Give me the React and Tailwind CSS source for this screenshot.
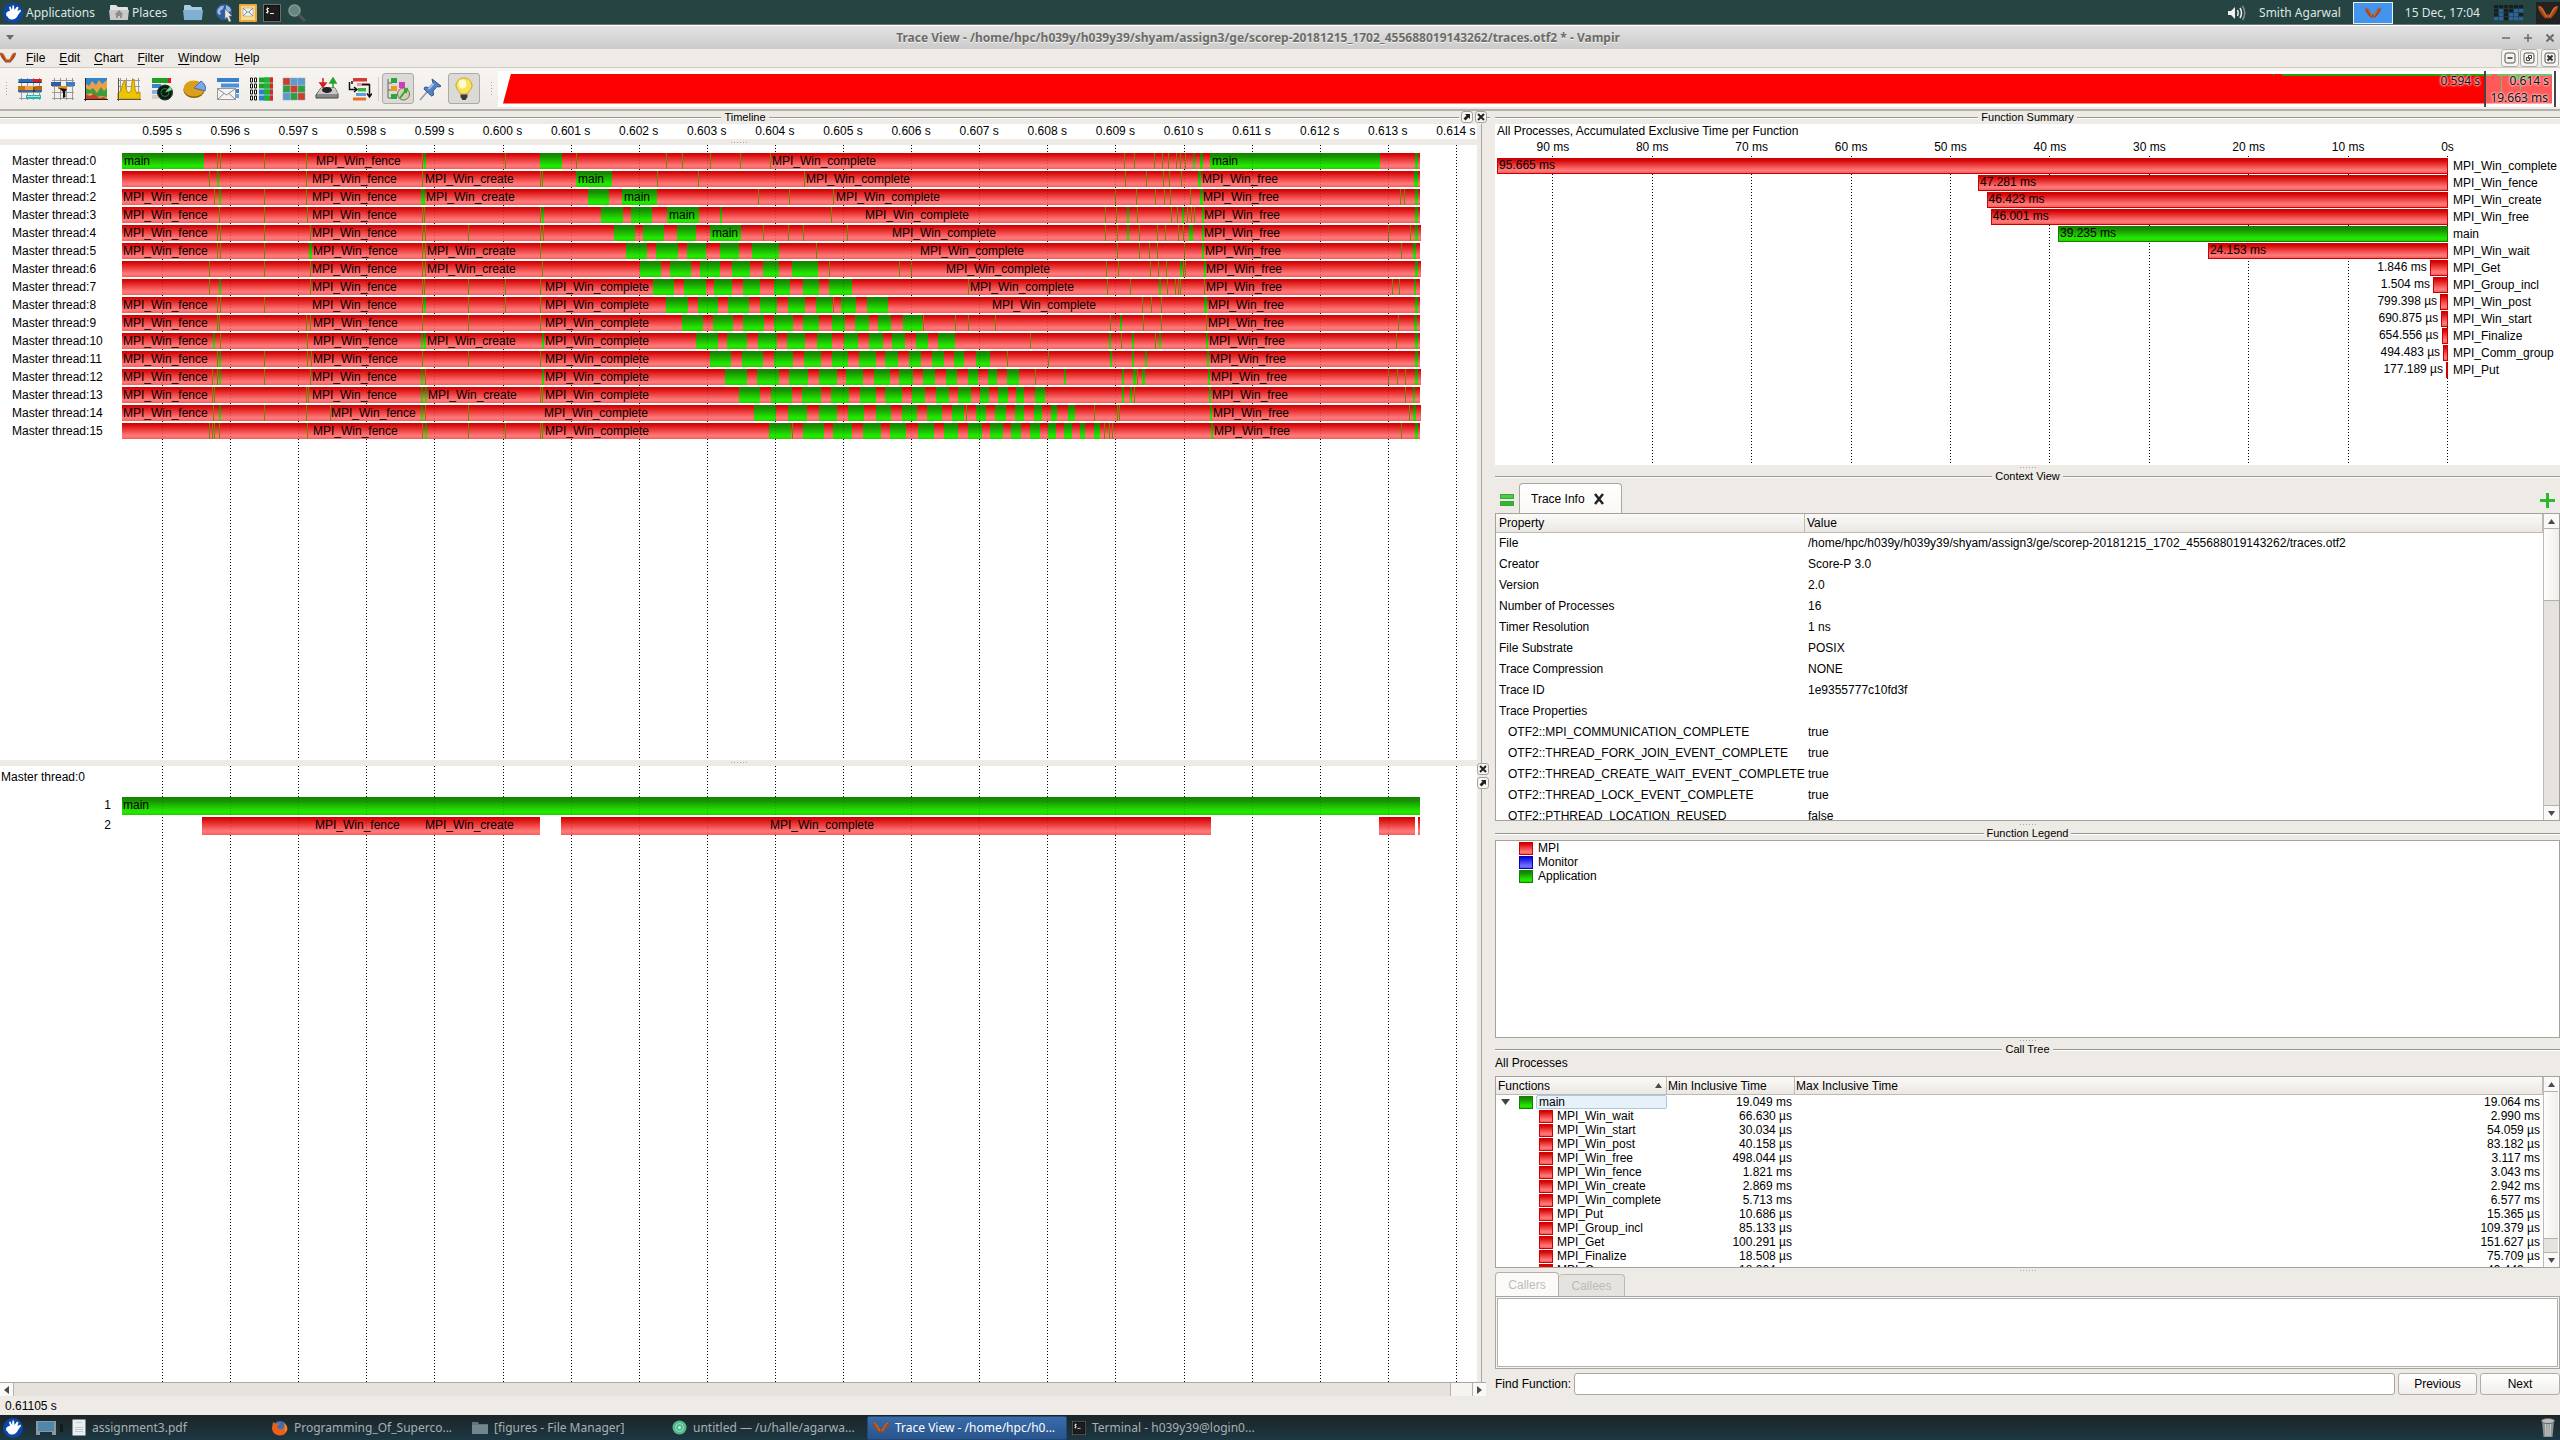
import React from "react";

const RED = "bg-[linear-gradient(to_bottom,#d00000_0%,#d80a0a_12%,#ff7272_75%,#ff7a7a_82%,#f45c5c_100%)]";
const GREEN = "bg-[linear-gradient(to_bottom,#148200_0%,#188f02_20%,#22df00_72%,#25ea00_85%,#20cc00_100%)]";
const BLUE = "bg-[linear-gradient(to_bottom,#0000d8_0%,#7272ff_80%,#5c5cf4_100%)]";
const DOTS = "bg-[repeating-linear-gradient(to_bottom,#000_0px,#000_1px,transparent_1px,transparent_3px)]";

/* Timeline geometry: plot coordinates run from 122 to 1477. */
const px = (x) => `${((x - 122) / 1355) * 100}%`;
const pw = (w) => `${(w / 1355) * 100}%`;
const ticks = Array.from({ length: 20 }, (_, i) => ({
  x: 162 + i * 68.1,
  t: (0.595 + i / 1000).toFixed(3) + " s",
}));

const F = "MPI_Win_fence";
const C = "MPI_Win_create";
const K = "MPI_Win_complete";
const R = "MPI_Win_free";

/* g: application segments as [start, end] or a single start for a hairline; t: labels. */
const threads = [
  { g: [[122, 204], 217, 220, 264, 306, 422, [424, 426], 505, [540, 562], 576, 666, 682, 710, 740, 770, 1124, 1134, 1154, 1162, 1168, 1176, 1180, 1185, [1193, 1195], [1200, 1203], [1210, 1380], [1415, 1418]], t: [[123, "main"], [315, F], [771, K], [1211, "main"]] },
  { g: [209, [217, 219], 306, 422, 540, 542, [576, 612], 657, 698, 804, 1125, 1146, 1163, 1169, 1181, [1198, 1201], [1414, 1418]], t: [[311, F], [424, C], [577, "main"], [805, K], [1201, R]] },
  { g: [214, [219, 221], 264, 306, [421, 425], [588, 609], [622, 657], 758, 789, 833, 1115, 1136, 1155, 1164, 1170, 1190, [1200, 1203], 1400, 1404, [1415, 1418]], t: [[122, F], [311, F], [425, C], [623, "main"], [835, K], [1202, R]] },
  { g: [219, 264, 307, 422, 424, 540, [542, 544], [601, 623], [631, 652], [667, 699], [720, 722], 831, 1105, 1116, [1127, 1129], 1137, 1171, 1177, [1182, 1184], 1187, 1191, 1194, [1202, 1204], [1415, 1418]], t: [[122, F], [311, F], [668, "main"], [864, K], [1203, R]] },
  { g: [217, 220, 264, 310, 422, 425, 468, 540, 543, [614, 635], [643, 664], [677, 696], [710, 741], 763, 788, 803, 847, 1105, 1117, [1127, 1129], 1139, 1157, 1165, 1178, 1183, [1189, 1193], [1202, 1204], 1388, 1410, [1415, 1418]], t: [[122, F], [311, F], [711, "main"], [891, K], [1203, R]], end: 1421 },
  { g: [217, 220, 264, [309, 312], 422, 425, 540, [626, 647], [656, 678], [687, 706], [720, 739], [752, 779], 816, 1117, 1139, 1149, 1157, 1184, [1202, 1204], 1401, [1413, 1416]], t: [[122, F], [312, F], [426, C], [919, K], [1204, R]] },
  { g: [209, 264, 310, 422, 425, 542, [640, 661], [670, 691], [700, 720], [732, 750], [763, 779], [792, 818], 829, 899, 911, 1106, 1118, 1150, 1158, 1166, [1180, 1182], 1183, 1185, [1204, 1206], [1415, 1418]], t: [[311, F], [426, C], [945, K], [1205, R]], end: 1421 },
  { g: [209, [219, 221], 310, 422, 424, 468, 505, 540, [653, 674], [684, 706], [714, 732], [743, 760], [774, 790], [803, 819], [829, 852], 968, 1107, 1130, [1159, 1161], 1167, 1175, 1178, 1180, 1204, 1392, 1399, [1414, 1416]], t: [[311, F], [544, K], [969, K], [1205, R]] },
  { g: [217, 220, 264, 422, [424, 426], 468, 505, 540, [666, 688], [698, 718], [728, 749], [760, 777], [788, 805], [816, 832], 833, [841, 856], [867, 888], 1142, 1151, 1161, [1204, 1207], [1415, 1418]], t: [[122, F], [311, F], [544, K], [991, K], [1207, R]] },
  { g: [217, 219, 306, 310, 422, 468, 540, [682, 703], [713, 733], [743, 764], [774, 793], [803, 819], [832, 845], [855, 869], [878, 891], [903, 922], 923, 955, 968, 995, 1110, [1120, 1122], 1143, 1161, 1206, 1398, [1414, 1417]], t: [[122, F], [312, F], [544, K], [1207, R]] },
  { g: [[213, 215], 220, 307, [421, 423], [424, 426], [542, 544], [696, 718], [727, 747], [758, 777], [787, 805], [817, 832], [844, 858], [869, 883], [892, 905], [916, 928], [938, 955], 1030, [1109, 1111], 1121, [1132, 1134], 1155, [1159, 1161], [1206, 1208], 1396, [1415, 1418]], t: [[122, F], [312, F], [426, C], [544, K], [1208, R]] },
  { g: [217, [219, 221], 264, 307, 311, 422, 468, 540, [710, 731], [742, 763], [774, 793], [804, 821], [832, 848], [859, 876], [885, 898], [909, 921], [932, 944], [954, 964], [976, 990], 1007, 1048, [1110, 1112], [1132, 1134], [1145, 1147], [1207, 1209], [1415, 1418]], t: [[122, F], [312, F], [544, K], [1209, R]] },
  { g: [212, 217, [219, 221], 264, 310, [421, 423], 425, [542, 544], [725, 747], [757, 779], [789, 808], [819, 837], [846, 863], [874, 890], [899, 913], [923, 935], [946, 957], [968, 978], [988, 997], [1007, 1019], 1035, [1064, 1066], [1122, 1124], [1133, 1136], 1137, [1142, 1145], [1208, 1210], 1388, 1397, 1405, [1415, 1418]], t: [[122, F], [311, F], [544, K], [1210, R]], end: 1421 },
  { g: [212, 214, 306, 308, [421, 423], [425, 427], 540, 542, [739, 760], [771, 792], [802, 821], [831, 849], [860, 876], [885, 902], [912, 925], [936, 949], [958, 971], [980, 989], [998, 1008], [1016, 1024], [1035, 1045], [1122, 1124], [1130, 1132], 1134, [1209, 1211], 1405, [1413, 1415]], t: [[122, F], [311, F], [427, C], [544, K], [1211, R]] },
  { g: [213, [219, 221], 264, 306, 330, [421, 423], 425, 468, [754, 776], [788, 807], [819, 837], [848, 864], [876, 891], [902, 917], [927, 942], [952, 964], 966, [976, 986], [995, 1006], [1015, 1024], [1034, 1042], [1051, 1057], [1068, 1075], 1094, 1117, 1119, [1210, 1212], 1409, [1413, 1416]], t: [[122, F], [330, F], [543, K], [1212, R]], end: 1421 },
  { g: [209, 212, 214, 219, 307, 422, [425, 427], 468, 505, 540, 542, [769, 791], 792, [803, 824], [833, 852], [863, 881], [890, 906], [918, 934], [944, 958], [968, 982], [990, 1003], [1011, 1021], [1030, 1040], [1048, 1056], [1064, 1072], [1080, 1085], [1094, 1100], 1104, 1109, 1112, [1211, 1213], 1401, [1415, 1418]], t: [[312, F], [544, K], [1213, R]] },
];

const summary = [
  [K, 95.665, "95.665 ms"], [F, 47.281, "47.281 ms"], [C, 46.423, "46.423 ms"], [R, 46.001, "46.001 ms"],
  ["main", 39.235, "39.235 ms"], ["MPI_Win_wait", 24.153, "24.153 ms"], ["MPI_Get", 1.846, "1.846 ms"],
  ["MPI_Group_incl", 1.504, "1.504 ms"], ["MPI_Win_post", 0.799, "799.398 µs"], ["MPI_Win_start", 0.691, "690.875 µs"],
  ["MPI_Finalize", 0.655, "654.556 µs"], ["MPI_Comm_group", 0.494, "494.483 µs"], ["MPI_Put", 0.177, "177.189 µs"],
];

const props = [
  ["File", "/home/hpc/h039y/h039y39/shyam/assign3/ge/scorep-20181215_1702_455688019143262/traces.otf2"],
  ["Creator", "Score-P 3.0"], ["Version", "2.0"], ["Number of Processes", "16"], ["Timer Resolution", "1 ns"],
  ["File Substrate", "POSIX"], ["Trace Compression", "NONE"], ["Trace ID", "1e9355777c10fd3f"], ["Trace Properties", ""],
  ["OTF2::MPI_COMMUNICATION_COMPLETE", "true", 1], ["OTF2::THREAD_FORK_JOIN_EVENT_COMPLETE", "true", 1],
  ["OTF2::THREAD_CREATE_WAIT_EVENT_COMPLETE", "true", 1], ["OTF2::THREAD_LOCK_EVENT_COMPLETE", "true", 1],
  ["OTF2::PTHREAD_LOCATION_REUSED", "false", 1],
];

const tree = [
  ["MPI_Win_wait", "66.630 µs", "2.990 ms"], ["MPI_Win_start", "30.034 µs", "54.059 µs"], ["MPI_Win_post", "40.158 µs", "83.182 µs"],
  [R, "498.044 µs", "3.117 ms"], [F, "1.821 ms", "3.043 ms"], [C, "2.869 ms", "2.942 ms"], [K, "5.713 ms", "6.577 ms"],
  ["MPI_Put", "10.686 µs", "15.365 µs"], ["MPI_Group_incl", "85.133 µs", "109.379 µs"], ["MPI_Get", "100.291 µs", "151.627 µs"],
  ["MPI_Finalize", "18.508 µs", "75.709 µs"], ["MPI_Comm_group", "18.204 µs", "49.449 µs"],
];

function Svg({ w = 24, h = 24, box, children, className = "" }) {
  return (
    <svg width={w} height={h} viewBox={box || `0 0 ${w} ${h}`} className={`block shrink-0 ${className}`} aria-hidden="true">
      {children}
    </svg>
  );
}

const VLogo = ({ w = 16, h = 12 }) => (
  <Svg w={w} h={h} box="0 0 16 12">
    <path d="M0 1C2 0 4 2 5 4.500L7 8L8 7L9 8L11 4.500C12 2 14 0 16 1C16 4 13 8 10 11L9 10L8 11L7 10L6 11C3 8 0 4 0 1Z" fill="#a8481a" />
    <path d="M1 1.500C3 2 4 4 5 6L7 9.500M15 1.500C13 2 12 4 11 6L9 9.500" stroke="#d4712c" fill="none" />
  </Svg>
);

const Xubuntu = () => (
  <Svg w={20} h={20}>
    <circle cx="10" cy="10" r="10" fill="#0a47a9" />
    <path d="M3 11C4 8 6 8 7 8L6 4L7.500 3.500L9 7L9.500 2.500L11 2.500L11.500 7L14 3.500L15.500 4.500L14.500 8L17.500 6.500L18 8L15 12C14 15.500 10 17.500 6.500 16C5 15 5 13.500 3.500 13Z" fill="#fff" />
  </Svg>
);

const Folder = ({ color = "#7fb0d2", top = "#a9cbe2", home }) => (
  <Svg w={20} h={17}>
    <path d="M1 2Q1 1 2 1H7L9 3H18Q19 3 19 4V15Q19 16 18 16H2Q1 16 1 15Z" fill={top} />
    <path d="M0 6H20L19 15Q19 16 18 16H2Q1 16 1 15Z" fill={color} />
    {home && <path d="M10 6L14.500 10.500H13V14H11V12H9V14H7V10.500H5.500Z" fill="#8d8d8d" />}
  </Svg>
);

const Term = ({ s = 18 }) => (
  <Svg w={s} h={s} box="0 0 18 18">
    <rect x="0.500" y="0.500" width="17" height="17" fill="#1d1d1d" stroke="#6a6f6e" />
    <rect x="1.500" y="1.500" width="15" height="15" fill="none" stroke="#111" />
    <path d="M6 4.500H4Q3 5.500 4 6.500H5Q6 7.500 5 8.500H3M4.500 3.500V9.500M7 9.500H11" stroke="#e8e8e8" fill="none" />
  </Svg>
);

const grid = <path d="M3.500 1V23M9.500 1V23M15.500 1V23M21.500 1V23M1 3.500H23M1 9.500H23M1 15.500H23M1 21.500H23" stroke="#9a9a9a" fill="none" />;

const tools = [
  ["Master Timeline", <>
    {grid}
    <rect x="0.500" y="2" width="23" height="4" fill="#2d6cc0" /><rect x="15" y="2" width="8.500" height="4" fill="#e01b24" />
    <path d="M0.500 5.500H23.500" stroke="#1a3d70" />
    <rect x="0" y="9" width="7" height="4" fill="#c87510" /><rect x="7" y="9" width="10" height="4" fill="#f0a040" /><rect x="17" y="9" width="7" height="4" fill="#b5690c" />
    <rect x="0" y="13" width="24" height="2" fill="#3b66a0" /><rect x="8" y="18" width="15" height="4" fill="#2bb3b3" /><path d="M9 19.500H22" stroke="#a0e8e8" /><path d="M16 10V15" stroke="#111" /></>],
  ["Process Timeline", <>
    {grid}
    <rect x="0" y="5" width="10" height="4" fill="#2d5fa8" /><rect x="15" y="5" width="9" height="4" fill="#3f7ac4" />
    <rect x="7" y="9" width="9" height="3" fill="#e8892a" /><path d="M8 11L16 12L14 15L14.500 20L12 21L12 15Z" fill="#111" /></>],
  ["Counter Timeline", <>
    <rect x="1" y="1" width="22" height="21" fill="#2f86cc" /><path d="M1 6L5 9L8 4L12 8L15 3L18 7L23 3V22H1Z" fill="#e8a04a" />
    <path d="M1 11L6 13L9 11L13 16L17 10L20 14L23 11V20L18 19L12 20L7 16L1 18Z" fill="#3f9c3a" /><path d="M1 17L6 19L10 17L15 21L20 20L23 22H1Z" fill="#c2402c" />
    <path d="M1.500 1V24M0 22.500H24" stroke="#222" /></>],
  ["Performance Radar", <>
    {grid}
    <path d="M1 22V16L4 14L6 6L8 3L9 12L11 16L14 14L15 5L17 2L18 12L20 17L23 15V22Z" fill="#eec400" stroke="#c29400" /><path d="M1.500 1V24M0 22.500H24" stroke="#555" /></>],
  ["Function Summary", <>
    <rect x="2" y="1" width="19" height="5" fill="#21a121" /><rect x="18" y="1" width="3" height="5" fill="#e02020" /><rect x="2" y="7" width="9" height="4" fill="#3e7fd0" /><rect x="2" y="13" width="7" height="4" fill="#8ab0dc" /><rect x="2" y="18" width="7" height="4" fill="#d8cfc0" />
    <circle cx="15" cy="15.500" r="7.500" fill="#0b1d12" stroke="#1d3a28" /><circle cx="15" cy="15.500" r="4" fill="none" stroke="#2f7a45" /><path d="M15 15.500L20 9.500A8 8 0 0 1 22 13Z" fill="#7fdc8b" /></>],
  ["Message Summary", <>
    <ellipse cx="11" cy="13.500" rx="10.500" ry="7.500" fill="#8a6005" /><ellipse cx="11" cy="11.500" rx="10.500" ry="8" fill="#dba019" />
    <path d="M11 11L18 4Q24 8 22 14Z" fill="#7ea4e8" stroke="#4668b0" /></>],
  ["Process Summary", <>
    <rect x="1" y="1" width="22" height="4" fill="#3a7fd0" /><rect x="5" y="6.500" width="18" height="4" fill="#4d8fdc" /><rect x="10" y="12" width="13" height="4" fill="#3a7fd0" /><rect x="17" y="17" width="6" height="4" fill="#6aa4e4" />
    <rect x="1.500" y="11.500" width="18" height="11" fill="#f4f4f4" stroke="#9a9a9a" /><path d="M2 12L10.500 18L19 12M2 22L8 16.500M19 22L13 16.500" stroke="#8a8a8a" fill="none" /></>],
  ["Communication Matrix", <>
    {[0, 6, 12, 18].map((y) => <g key={y}><path d={`M1.500 ${y + 1}H3.500V${y + 5}H1.500ZM5.500 ${y + 1}H7.500V${y + 5}H5.500Z`} fill="#fff" stroke="#111" />
      <rect x="10" y={y + 0.500} width="14" height="5" fill={y > 6 ? "#2f7ecb" : "#1ca32c"} /><rect x="15" y={y + 0.500} width="6" height="5" fill="#22b032" /><rect x="21" y={y + 0.500} width="3" height="5" fill="#e02424" /></g>)}</>],
  ["I/O Summary", <>
    {[["#d33b2c", "#5b9bd5", "#5b9bd5"], ["#2f9e3f", "#d33b2c", "#2f9e3f"], ["#5b9bd5", "#2f9e3f", "#d33b2c"]].map((r, j) => r.map((c, i) => <rect key={`${i}-${j}`} x={1 + i * 7.500} y={1 + j * 7.500} width="7" height="7" fill={c} stroke="#8aa" strokeWidth="0.500" />))}</>],
  ["I/O Timeline", <>
    <path d="M6 11L20 11L23 17V21H1V18Z" fill="#8a8a8a" stroke="#444" /><path d="M6 11L20 11L23 17H2Z" fill="#c9c9c9" /><ellipse cx="12" cy="13" rx="5" ry="3" fill="#222" />
    <path d="M8 1V8M5 6L8 10L11 6Z" stroke="#d02020" strokeWidth="1.500" fill="#d02020" /><path d="M18 11V5M15 6L18 1L21 6Z" stroke="#28a428" strokeWidth="1.500" fill="#28a428" /></>],
  ["Call Tree", <>
    <rect x="5" y="1" width="14" height="3.500" fill="#d43a3a" /><rect x="9" y="6" width="12" height="3" fill="#e99a9a" /><rect x="10" y="11" width="8" height="3.500" fill="#35b53a" /><rect x="8" y="16" width="10" height="3" fill="#5c9fe0" /><rect x="5" y="20.500" width="13" height="3" fill="#e8702a" />
    <path d="M1.500 5V12.500H8M6 10L9 12.500L6 15M4 4V7M14 7.500H21.500V19M19 16.500L21.500 20L24 16.500" stroke="#111" fill="none" strokeWidth="1.500" /></>],
];

function Dock({ title }) {
  return (
    <div className="flex h-[13px] w-full shrink-0 items-center">
      <span className="h-[2px] flex-1 border-t border-[#9a9894] bg-white" />
      <h2 className="px-[3px] text-[11px] leading-[13px]">{title}</h2>
      <span className="h-[2px] flex-1 border-t border-[#9a9894] bg-white" />
    </div>
  );
}

function MiniButton({ kind }) {
  return (
    <button aria-label={kind} className="flex h-3 w-3 items-center justify-center rounded-[3px] border border-[#a5a29d] bg-[#f8f6f3]">
      <Svg w={8} h={8}>
        {kind === "close"
          ? <path d="M1 1L7 7M7 1L1 7" stroke="#222" strokeWidth="2" />
          : <path d="M2 1H7V6L5.500 4.500L2.500 7.500L0.500 5.500L3.500 2.500Z" fill="#222" />}
      </Svg>
    </button>
  );
}

function Dots() {
  return (
    <span className="flex shrink-0 gap-[2px]">
      {[0, 1, 2, 3, 4, 5].map((i) => <i key={i} className="h-px w-px bg-[#aaa7a2]" />)}
    </span>
  );
}

function GridLines({ faint }) {
  return (
    <div className={`pointer-events-none absolute inset-y-0 right-0 left-[122px] ${faint ? "opacity-20" : ""}`}>
      {ticks.map((k) => <i key={k.t} className={`absolute inset-y-0 w-px ${DOTS}`} style={{ left: px(k.x) }} />)}
    </div>
  );
}

function Seg({ a, b, color }) {
  return <i className={`absolute inset-y-0 ${color}`} style={{ left: px(a), width: pw(b - a) }} />;
}

function Labels({ items, lh }) {
  return items.map(([x, s]) => (
    <span key={x + s} className={`absolute top-0 pl-px whitespace-nowrap ${lh}`} style={{ left: px(x) }}>{s}</span>
  ));
}

function Scroll({ thumb, className = "w-4" }) {
  return (
    <div className={`flex shrink-0 flex-col border-l border-[#bdbab5] bg-[#e6e3df] ${className}`}>
      <button aria-label="Scroll up" className="flex h-[15px] shrink-0 items-center justify-center border-b border-[#b5b2ad] bg-[#faf9f7]"><Svg w={7} h={5}><path d="M3.500 0L7 5H0Z" fill="#4a4a4a" /></Svg></button>
      <div className={`border-b border-[#b5b2ad] bg-linear-to-r from-[#fdfdfc] to-[#f0eeea] ${thumb}`} />
      <div className="min-h-0 flex-[20] bg-[#e6e3df]" />
      <button aria-label="Scroll down" className="flex h-[15px] shrink-0 items-center justify-center border-t border-[#b5b2ad] bg-[#faf9f7]"><Svg w={7} h={5}><path d="M3.500 5L7 0H0Z" fill="#4a4a4a" /></Svg></button>
    </div>
  );
}

const HEAD = "border-r border-b border-[#bdbab5] bg-linear-to-b from-[#fbfaf8] to-[#ebe7e3] text-left font-normal";

function TopPanel() {
  return (
    <header className="flex h-[25px] shrink-0 items-center bg-[#254442] font-['Noto_Sans',sans-serif] text-[12px] text-[#dfe6e5]">
      <button className="flex items-center gap-[3px] pl-[3px]"><Xubuntu />Applications</button>
      <button className="flex items-center gap-[3px] pl-[14px]"><Folder color="#c9c9c7" top="#e2e2e0" home />Places</button>
      <button aria-label="File Manager" className="ml-4"><Folder /></button>
      <button aria-label="Web Browser" className="ml-3">
        <Svg w={20} h={20}><circle cx="9" cy="9" r="8" fill="#2f5f9e" /><path d="M3 6Q6 2 9 3L8 6L5 8L6 11L4 12Q1 9 3 6ZM11 2Q16 4 16 8L13 9L11 6Z" fill="#9cb9dc" /><path d="M10 6L17 13H14L16 18L14 19L12 14L10 16Z" fill="#e8e8e8" stroke="#777" strokeWidth="0.500" /></Svg>
      </button>
      <button aria-label="Mail" className="ml-1">
        <Svg w={18} h={18}><rect width="18" height="18" rx="1" fill="#e9a93a" /><rect x="2" y="2" width="14" height="14" fill="#f9d98e" /><rect x="4" y="4" width="10" height="8" fill="#f2f2f0" stroke="#999" strokeWidth="0.500" /><path d="M4 4L9 8.500L14 4M4 12L8 8M14 12L10 8" stroke="#888" fill="none" /></Svg>
      </button>
      <button aria-label="Terminal" className="ml-[6px]"><Term /></button>
      <button aria-label="Search" className="ml-[7px]">
        <Svg w={18} h={18}><circle cx="6.500" cy="6.500" r="5.500" fill="#62877f" stroke="#8a9896" strokeWidth="1.500" /><path d="M10.500 10.500L17 17" stroke="#4d5554" strokeWidth="3" /></Svg>
      </button>
      <div className="flex-1" />
      <button aria-label="Volume">
        <Svg w={20} h={16}><path d="M1 6H4L8 2V14L4 10H1Z" fill="#f0f0f0" /><path d="M10.500 5Q12 8 10.500 11M13 3Q16 8 13 13" stroke="#f0f0f0" strokeWidth="1.500" fill="none" /><path d="M15.500 1Q20 8 15.500 15" stroke="#7f918f" strokeWidth="1.500" fill="none" /></Svg>
      </button>
      <button className="ml-3">Smith Agarwal</button>
      <button aria-label="Workspace" className="ml-3 flex h-[22px] w-10 items-center justify-center border border-[#e6eef8] bg-[#4394ec]"><VLogo w={16} h={12} /></button>
      <time className="ml-3">15 Dec, 17:04</time>
      <Svg w={30} h={16} className="ml-[14px]">
        {["......", ".b..bb", ".b.bb.", "bb.bbb"].map((r, j) => r.split("").map((c, i) => <rect key={`${i}${j}`} x={i * 5} y={j * 4} width="4.200" height="3.300" fill={c === "b" ? "#2b63a0" : "#15201f"} />))}
      </Svg>
      <div className="ml-3 flex h-[22px] w-[24px] items-center justify-center bg-[#222]"><VLogo w={20} h={15} /></div>
    </header>
  );
}

function TitleBar() {
  return (
    <div className="relative flex h-6 shrink-0 items-center justify-between border-t border-white bg-linear-to-b from-[#e3e3e3] to-[#cbcbcb] px-[6px] font-['Noto_Sans',sans-serif] text-[#6d6b66] shadow-[0_-1px_0_#6b7a79]">
      <Svg w={8} h={6}><path d="M0 0H8L4 5Z" fill="#6d6b66" /></Svg>
      <h1 className="text-[12px] font-bold [text-shadow:0_1px_0_#f4f4f4]">Trace View - /home/hpc/h039y/h039y39/shyam/assign3/ge/scorep-20181215_1702_455688019143262/traces.otf2 * - Vampir</h1>
      <div className="flex gap-[14px]">
        <button aria-label="Minimize"><Svg w={8} h={8}><path d="M0 4H8" stroke="#6d6b66" strokeWidth="1.500" /></Svg></button>
        <button aria-label="Maximize"><Svg w={8} h={8}><path d="M0 4H8M4 0V8" stroke="#6d6b66" strokeWidth="1.500" /></Svg></button>
        <button aria-label="Close"><Svg w={8} h={8}><path d="M0.500 0.500L7.500 7.500M7.500 0.500L0.500 7.500" stroke="#6d6b66" strokeWidth="2" /></Svg></button>
      </div>
    </div>
  );
}

function MenuBar() {
  const win = "flex h-[18px] w-[18px] items-center justify-center rounded-[3px] border border-[#b3b0ab] bg-[#f6f4f1]";
  return (
    <nav className="flex h-[19px] shrink-0 items-center border-b border-[#cfccc7]">
      <VLogo />
      <div className="flex flex-1 gap-[14px] pl-[10px]">
        {["File", "Edit", "Chart", "Filter", "Window", "Help"].map((m) => (
          <button key={m} className="leading-4"><u className="underline-offset-2">{m[0]}</u>{m.slice(1)}</button>
        ))}
      </div>
      <div className="flex gap-px pr-px">
        <button aria-label="Minimize view" className={win}><Svg w={12} h={12}><rect x="1" y="1" width="10" height="10" rx="2" fill="none" stroke="#555" /><path d="M3.500 6H8.500" stroke="#333" strokeWidth="1.500" /></Svg></button>
        <button aria-label="Restore view" className={win}><Svg w={12} h={12}><rect x="1" y="1" width="10" height="10" rx="2" fill="none" stroke="#555" /><path d="M5.500 3.500H8.500V6.500H5.500ZM3.500 5.500H6.500V8.500H3.500Z" fill="#f6f4f1" stroke="#444" /></Svg></button>
        <button aria-label="Close view" className={`ml-[2px] ${win}`}><Svg w={12} h={12}><rect x="1" y="1" width="10" height="10" rx="2" fill="none" stroke="#555" /><path d="M3.500 3.500L8.500 8.500M8.500 3.500L3.500 8.500" stroke="#333" strokeWidth="2" /></Svg></button>
      </div>
    </nav>
  );
}

const HALO = "text-[#111] [text-shadow:0_0_2px_#fbb,0_0_2px_#fbb,0_0_3px_#fbb,0_0_3px_#fbb]";

function Overview() {
  return (
    <div className="relative flex h-9 flex-1 items-center bg-white font-['Noto_Sans',sans-serif]">
      <div className="relative h-[30px] flex-1 [clip-path:polygon(13px_0,100%_0,100%_100%,5px_100%)]">
        <div className="absolute inset-0 bg-[#ff0000]" />
        <div className="absolute top-0 right-[60px] h-[2px] w-[210px] bg-[#22a010]" />
        <div className="absolute top-0 right-[278px] h-[2px] w-px bg-[#22a010]" />
        <div className="absolute top-0 right-0 h-[2px] w-[55px] bg-[#22a010]" />
        <div className="absolute top-0 right-[20px] h-[6px] w-[22px] bg-[#22a010]" />
        <div className="absolute top-0 right-[50px] h-[22px] w-px bg-[#22a010]" />
        <div className="absolute top-0 right-[31px] h-[16px] w-px bg-[#22a010]" />
      </div>
      <div className="w-2" />
      <div className="absolute inset-y-0 right-[4px] w-[72px] border-x-2 border-[#454545] bg-white/35" />
      <span className={`absolute top-[2px] right-[80px] leading-4 ${HALO}`}>0.594 s</span>
      <span className={`absolute top-[2px] right-[11px] leading-4 ${HALO}`}>0.614 s</span>
      <span className={`absolute top-[19px] right-[12px] leading-4 ${HALO}`}>19.663 ms</span>
    </div>
  );
}

function Toolbar() {
  const grip = "h-4 w-1 bg-[radial-gradient(circle,#aaa7a2_0_1px,transparent_1px)] bg-[length:3px_3px]";
  const on = "flex h-[31px] w-8 items-center justify-center rounded-[3px] border border-[#adaaa5] bg-[#dcdad6]";
  return (
    <div className="flex h-[43px] shrink-0 items-center border-b-2 border-[#b4b0ac] bg-linear-to-b from-[#f8f5f1] to-[#efece7]">
      <div className="flex w-[498px] shrink-0 items-center pl-[5px]">
        <span className={grip} />
        <div className="flex pl-[4px]">
          {tools.map(([n, d]) => <button key={n} aria-label={n} title={n} className="flex h-8 w-[33px] items-center justify-center"><Svg>{d}</Svg></button>)}
        </div>
        <span className="ml-[2px] h-6 w-px bg-[#d2cfca]" />
        <button aria-label="Context view" className={`ml-[3px] ${on}`}>
          <Svg>
            <path d="M2 2V21H6M2 6H6M2 13H6" stroke="#666" fill="none" /><rect x="5" y="1" width="6" height="5" fill="#27a838" /><rect x="5" y="9" width="6" height="5" fill="#ee9a20" /><rect x="5" y="17" width="6" height="5" fill="#27a838" />
            <rect x="13" y="5" width="6" height="6" fill="#d43ac0" /><circle cx="17.500" cy="17" r="6" fill="#d8cdb4" stroke="#776d55" /><path d="M14 21L20 13M18 13L21 12L20 16" stroke="#25b030" strokeWidth="2" />
          </Svg>
        </button>
        <button aria-label="Pin" className="flex h-8 w-[34px] items-center justify-center">
          <Svg><path d="M1 23L8 15" stroke="#8a98ac" strokeWidth="1.500" /><path d="M13 2L22 9L20 10L18 9.500L14 14L14.500 18L12.500 19L5 12L6 10L10 10.500L14 6L13.500 4Z" fill="#5583c2" stroke="#2d5390" /><path d="M14.500 6.500L9.500 12" stroke="#a8c4e8" strokeWidth="2" /></Svg>
        </button>
        <button aria-label="Hints" className={on}>
          <Svg><path d="M12 1C7 1 4 4.500 4 9C4 13 8 14 8.500 17H15.500C16 14 20 13 20 9C20 4.500 17 1 12 1Z" fill="#f8e25a" stroke="#c8a820" /><ellipse cx="10.500" cy="7" rx="4" ry="4.500" fill="#fffbd0" /><path d="M8.500 17.500H15.500V20L13.500 23H10.500L8.500 20Z" fill="#3a3a3a" /></Svg>
        </button>
        <span className={`ml-[10px] ${grip}`} />
      </div>
      <Overview />
    </div>
  );
}

function Timeline() {
  return (
    <section className="flex min-h-0 min-w-0 flex-[1495] flex-col">
      <div className="relative pr-[5px]">
        <Dock title="Timeline" />
        <span className="absolute top-0 right-2 flex gap-[2px] bg-[#eeebe6] pl-[2px]"><MiniButton kind="detach" /><MiniButton kind="close" /></span>
      </div>
      <div className="flex min-h-0 flex-1">
        <div className="flex min-w-0 flex-1 flex-col">
          <div className="relative h-[15px] shrink-0 bg-white">
            <div className="absolute inset-y-0 right-0 left-[122px]">
              {ticks.map((k) => <span key={k.t} className="absolute top-0 -translate-x-1/2 leading-[14px] whitespace-nowrap" style={{ left: px(k.x) }}>{k.t}</span>)}
            </div>
          </div>
          <div className="flex h-[6px] shrink-0 items-center justify-center"><Dots /></div>
          <div className="relative min-h-0 flex-[612] overflow-hidden bg-white pt-2">
            <GridLines />
            <div className="relative flex flex-col gap-[2px]">
              {threads.map((th, i) => (
                <div key={i} className="flex h-4 items-center">
                  <span className="w-[122px] shrink-0 pl-3 leading-4">Master thread:{i}</span>
                  <div className="relative h-4 flex-1">
                    <Seg a={122} b={th.end || 1420} color={RED} />
                    {th.g.map((s, n) => Array.isArray(s) ? <Seg key={n} a={s[0]} b={s[1]} color={GREEN} /> : <i key={n} className="absolute inset-y-0 w-px bg-[#6a8a00]" style={{ left: px(s) }} />)}
                    <Labels items={th.t} lh="leading-4" />
                  </div>
                </div>
              ))}
            </div>
            <GridLines faint />
          </div>
          <div className="flex h-[6px] shrink-0 items-center justify-center"><Dots /></div>
          <div className="relative min-h-0 flex-[619] overflow-hidden bg-white pt-[3px]">
            <GridLines />
            <div className="relative">
              <p className="pl-px leading-4">Master thread:0</p>
              <div className="mt-3 flex h-[18px]">
                <span className="w-[122px] shrink-0 pr-[11px] text-right leading-4">1</span>
                <div className="relative flex-1"><Seg a={122} b={1420} color={GREEN} /><Labels items={[[122, "main"]]} lh="leading-4" /></div>
              </div>
              <div className="mt-[2px] flex h-[18px]">
                <span className="w-[122px] shrink-0 pr-[11px] text-right leading-4">2</span>
                <div className="relative flex-1">
                  {[[202, 540], [561, 1211], [1379, 1415], [1418, 1420]].map(([a, b]) => <Seg key={a} a={a} b={b} color={RED} />)}
                  <Labels items={[[314, F], [424, C], [769, K]]} lh="leading-4" />
                </div>
              </div>
            </div>
            <GridLines faint />
          </div>
        </div>
        <div className="flex w-[18px] shrink-0 flex-col">
          <span className="ml-1 flex-[639] border-l border-[#a9a6a1]" />
          <span className="flex flex-col gap-[2px]"><MiniButton kind="close" /><MiniButton kind="detach" /></span>
          <span className="ml-1 flex-[593] border-l border-[#a9a6a1]" />
        </div>
      </div>
      <div className="mr-[9px] flex h-[14px] shrink-0 border-t border-[#aba8a3] bg-[#e6e3df]">
        <button aria-label="Scroll left" className="flex w-[14px] items-center justify-center border-r border-[#b5b2ad] bg-[#faf9f7]"><Svg w={5} h={8}><path d="M5 0V8L0 4Z" fill="#4a4a4a" /></Svg></button>
        <span className="flex-1" />
        <span className="w-[22px] border-l border-[#b5b2ad] bg-[#f6f4f1]" />
        <button aria-label="Scroll right" className="flex w-[14px] items-center justify-center border-l border-[#b5b2ad] bg-[#faf9f7]"><Svg w={5} h={8}><path d="M0 0V8L5 4Z" fill="#4a4a4a" /></Svg></button>
      </div>
    </section>
  );
}

function Summary() {
  return (
    <div className="relative flex min-h-0 flex-[341] flex-col overflow-hidden bg-white">
      <h3 className="shrink-0 pl-[2px] leading-[14px]">All Processes, Accumulated Exclusive Time per Function</h3>
      <div className="relative min-h-0 flex-1">
        <div className="absolute inset-y-0 right-[112px] left-0">
          {[90, 80, 70, 60, 50, 40, 30, 20, 10, 0].map((v) => (
            <div key={v} className="absolute inset-y-0 flex w-px flex-col items-center" style={{ right: `${(v / 95.87) * 100}%` }}>
              <span className="leading-[18px] whitespace-nowrap">{v ? `${v} ms` : "0s"}</span>
              <i className={`w-px flex-1 ${DOTS}`} />
            </div>
          ))}
        </div>
        <div className="relative flex flex-col gap-px pt-5">
          {summary.map(([n, v, s]) => (
            <div key={n} className="flex h-4 leading-4">
              <div className="flex min-w-0 flex-1 justify-end">
                {v < 2 && <span className="pr-[3px] leading-[14px] whitespace-nowrap">{s}</span>}
                <div className={`border whitespace-nowrap ${n === "main" ? `border-[#128000] ${GREEN}` : `border-[#cc0000] ${RED}`}`} style={{ width: `${(v / 95.87) * 100}%` }}>
                  {v > 2 && <span className="block pl-px leading-3">{s}</span>}
                </div>
              </div>
              <span className="w-[112px] shrink-0 pl-[5px]">{n}</span>
            </div>
          ))}
        </div>
      </div>
    </div>
  );
}

function Context() {
  return (
    <>
      <div className="flex h-[30px] shrink-0 items-end">
        <button aria-label="List" className="mb-[7px] ml-[5px]"><Svg w={14} h={12}><rect x="0.500" y="0.500" width="13" height="4" fill="#3fd43f" stroke="#4a9a4a" /><rect x="0.500" y="7.500" width="13" height="4" fill="#22c022" stroke="#4a9a4a" /></Svg></button>
        <button className="ml-[5px] flex h-[30px] items-center gap-2 rounded-t border border-b-0 border-[#a9a6a1] bg-linear-to-b from-white to-[#faf8f5] pr-4 pl-[11px]">Trace Info
          <Svg w={12} h={12}><path d="M2 1L10 11M10 1L2 11" stroke="#222" strokeWidth="2.500" /></Svg>
        </button>
        <span className="flex-1" />
        <button aria-label="Add" className="mr-[5px] mb-[5px]"><Svg w={15} h={15}><path d="M7.500 0V15M0 7.500H15" stroke="#2eb82e" strokeWidth="3" /></Svg></button>
      </div>
      <div className="flex min-h-0 flex-[306] border border-[#a5a29d] bg-white">
        <div className="min-w-0 flex-1 overflow-hidden">
          <table className="w-full table-fixed border-separate border-spacing-0">
            <thead><tr className="h-[19px]"><th className={`w-[309px] pl-[3px] ${HEAD}`}>Property</th><th className={`pl-[2px] ${HEAD}`}>Value</th></tr></thead>
            <tbody>
              {props.map(([a, b, ind]) => (
                <tr key={a} className="h-[21px] leading-[21px] whitespace-nowrap"><td className={ind ? "pl-3" : "pl-[3px]"}>{a}</td><td className="pl-[3px]">{b}</td></tr>
              ))}
            </tbody>
          </table>
        </div>
        <Scroll thumb="flex-[7]" />
      </div>
    </>
  );
}

const Chip = ({ color, border }) => <i className={`h-[13px] w-[14px] shrink-0 border ${border} ${color}`} />;

function CallTree() {
  return (
    <>
      <div className="flex min-h-0 flex-[190] border border-[#a5a29d] bg-white">
        <div className="min-w-0 flex-1 overflow-hidden">
          <table className="w-full table-fixed border-separate border-spacing-0">
            <thead>
              <tr className="h-[18px] leading-4">
                <th className={`w-[171px] pl-[2px] ${HEAD}`}><span className="flex items-center justify-between pr-1">Functions<Svg w={7} h={5}><path d="M3.500 0L7 5H0Z" fill="#4a4a4a" /></Svg></span></th>
                <th className={`w-[128px] pl-px ${HEAD}`}>Min Inclusive Time</th>
                <th className={`pl-px ${HEAD}`}>Max Inclusive Time</th>
              </tr>
            </thead>
            <tbody className="leading-[14px] whitespace-nowrap">
              <tr className="h-[14px]">
                <td><span className="flex h-[14px] items-center pl-[5px]"><Svg w={9} h={6}><path d="M0 0H9L4.500 6Z" fill="#444" /></Svg><span className="w-[9px]" /><Chip color={GREEN} border="border-[#128000]" /><span className="ml-[3px] h-[14px] flex-1 rounded-[2px] border border-[#a9c9dc] bg-[#e6f1f9] pl-[2px] leading-3">main</span></span></td>
                <td className="pr-[3px] text-right">19.049 ms</td><td className="pr-[3px] text-right">19.064 ms</td>
              </tr>
              {tree.map(([n, a, b]) => (
                <tr key={n} className="h-[14px]">
                  <td><span className="flex h-[14px] items-center gap-1 pl-[43px]"><Chip color={RED} border="border-[#d00000]" />{n}</span></td>
                  <td className="pr-[3px] text-right">{a}</td><td className="pr-[3px] text-right">{b}</td>
                </tr>
              ))}
            </tbody>
          </table>
        </div>
        <Scroll thumb="flex-[220]" className="mr-px w-[15px]" />
      </div>
      <div className="flex h-1 shrink-0 items-center justify-center"><Dots /></div>
      <div className="flex h-6 shrink-0 items-end text-[#bfbcb7]">
        <button disabled className="h-6 w-16 rounded-t border border-b-0 border-[#b3b0ab] bg-[#fbfaf8]">Callers</button>
        <button disabled className="h-[22px] w-[66px] rounded-t border border-b-0 border-l-0 border-[#bdbab5] bg-[#e5e3df]">Callees</button>
      </div>
      <div className="min-h-0 flex-[69] border border-[#a9a6a1] bg-[#f8f6f3] p-px"><div className="h-full border border-[#b3b0ab] bg-white" /></div>
      <div className="flex h-[27px] shrink-0 items-end gap-[3px] pb-px">
        <label htmlFor="find" className="leading-[22px]">Find Function:</label>
        <input id="find" className="h-[22px] min-w-0 flex-1 rounded-[3px] border border-[#a9a6a1] bg-white px-1 outline-none" />
        <button className="h-[22px] w-[79px] rounded-[3px] border border-[#b0ada8] bg-linear-to-b from-white to-[#f1eeea]">Previous</button>
        <button className="h-[22px] w-20 rounded-[3px] border border-[#b0ada8] bg-linear-to-b from-white to-[#f1eeea]">Next</button>
      </div>
    </>
  );
}

function Taskbar() {
  const item = "flex h-6 w-[200px] items-center gap-[6px] pl-[5px] whitespace-nowrap";
  return (
    <footer className="flex h-[25px] shrink-0 items-center bg-linear-to-b from-[#1c2427] to-[#1c3844] font-['Noto_Sans',sans-serif] text-[12px] text-[#a7b0b3]">
      <button aria-label="Menu" className="pl-[3px]"><Xubuntu /></button>
      <button aria-label="Show desktop" className="ml-[13px]"><Svg w={20} h={16}><path d="M0 1H20V15H16V12H4V15H0Z" fill="#8b999f" /><rect x="2" y="2" width="16" height="9" fill="#4f87ab" /></Svg></button>
      <span className="ml-1 h-2 w-[3px] bg-[#111a1d]" />
      <div className="flex pl-1">
        <button className={item}><Svg w={14} h={17}><rect x="0.500" y="0.500" width="13" height="16" fill="#eceeed" /><path d="M4 3.500H10M3 8.500H11M3 10.500H11M3 12.500H11" stroke="#b5cfd3" /></Svg>assignment3.pdf</button>
        <button className={item}><Svg w={16} h={16}><circle cx="8" cy="8" r="7" fill="#3a6fb5" /><path d="M1 2L4 4Q7 2 8 4L5 6Q6 10 10 9Q13 7 12 3Q17 7 15 11Q12 16 7 15.500Q0 14 0 8Z" fill="#e9601c" /><path d="M12 3Q17 8 12 13Q15 8 12 3Z" fill="#f7b731" /></Svg>Programming_Of_Superco...</button>
        <button className={item}><Svg w={16} h={14}><path d="M0 1H6L7 3H16V13H0Z" fill="#5f7680" /><path d="M0 4H16V13H0Z" fill="#71868f" /></Svg>[figures - File Manager]</button>
        <button className={item}><Svg w={15} h={15}><circle cx="7.500" cy="7.500" r="7" fill="#52b98a" /><circle cx="7.500" cy="7.500" r="4" fill="none" stroke="#9fe0c1" /><circle cx="7.500" cy="7.500" r="1.500" fill="#c8f0dc" /></Svg>untitled — /u/halle/agarwa...</button>
        <button className={`${item} rounded-[2px] border border-[#204a7c] bg-linear-to-b from-[#3a6ca8] to-[#28548c] text-white`}><VLogo w={16} h={13} />Trace View - /home/hpc/h0...</button>
        <button className={item}><Term s={14} />Terminal - h039y39@login0...</button>
      </div>
      <span className="flex-1" />
      <button aria-label="Trash" className="pr-[5px]"><Svg w={14} h={20}><path d="M1 3L2.500 19H11.500L13 3Z" fill="#8e9392" /><path d="M4.500 5L5 18M7 5V18M9.500 5L9 18" stroke="#cfd2d1" /><ellipse cx="7" cy="3" rx="6.500" ry="2.500" fill="#bcc0bf" stroke="#666" /></Svg></button>
    </footer>
  );
}

export default function App() {
  return (
    <div className="flex h-screen flex-col overflow-hidden bg-[#eeebe6] font-['Liberation_Sans',sans-serif] text-[12px] text-black">
      <TopPanel />
      <TitleBar />
      <MenuBar />
      <Toolbar />
      <main className="flex min-h-0 flex-1">
        <Timeline />
        <section className="flex min-w-0 flex-[1065] flex-col">
          <Dock title="Function Summary" />
          <Summary />
          <div className="flex h-[5px] shrink-0 items-center justify-center"><Dots /></div>
          <Dock title="Context View" />
          <Context />
          <div className="flex h-[6px] shrink-0 items-center justify-center"><Dots /></div>
          <Dock title="Function Legend" />
          <ul className="min-h-0 flex-[196] overflow-hidden border border-[#a5a29d] bg-white pl-[23px] leading-[14px]">
            <li className="flex h-[14px] items-center gap-[5px]"><Chip color={RED} border="border-[#d00000]" />MPI</li>
            <li className="flex h-[14px] items-center gap-[5px]"><Chip color={BLUE} border="border-[#0000c8]" />Monitor</li>
            <li className="flex h-[14px] items-center gap-[5px]"><Chip color={GREEN} border="border-[#128000]" />Application</li>
          </ul>
          <div className="flex h-[5px] shrink-0 items-center justify-center"><Dots /></div>
          <Dock title="Call Tree" />
          <h3 className="h-5 shrink-0 leading-[14px]">All Processes</h3>
          <CallTree />
        </section>
      </main>
      <div className="flex h-[19px] shrink-0 items-center pl-[5px]">0.61105 s</div>
      <Taskbar />
    </div>
  );
}
